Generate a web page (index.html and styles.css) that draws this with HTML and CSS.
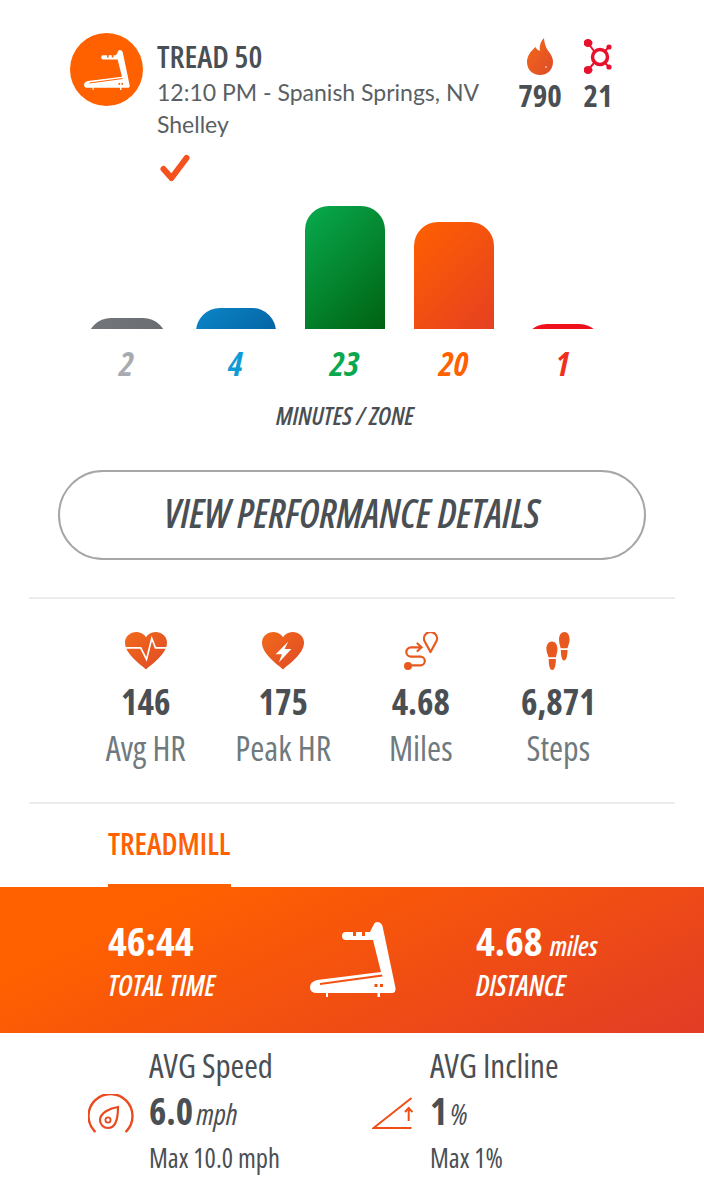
FILE: index.html
```html
<!DOCTYPE html>
<html lang="en">
<head>
    <meta charset="UTF-8">
    <meta name="viewport" content="width=device-width, initial-scale=1.0">
    <title>Tread 50</title>
    <link rel="stylesheet" href="styles.css">
</head>
<body>
    <svg class="defs" width="0" height="0" aria-hidden="true">
        <defs>
            <linearGradient id="warm" x1="0" y1="0" x2="1" y2="1">
                <stop offset="0" stop-color="#f26a1b"/>
                <stop offset="1" stop-color="#df4a26"/>
            </linearGradient>
            <!-- treadmill, used in the class badge and the orange band -->
            <symbol id="treadmill" viewBox="0 0 86 75">
                <path fill-rule="evenodd" d="M67 0Q71 0 72.5 4L85.5 66Q86 71 82 71H70V75H67.5V71H18V75H16V71H7Q0 71 0 65Q0 60 7 58L71 50L63 18H36Q32 18 32 14Q32 10 36 10H60L64 2Q65 0 67 0ZM43 10H46V14H43ZM52 10H55V14H52ZM10 61L72 52.5L72.5 54.5L10 63ZM64.5 62H67.5V65H64.5ZM70 62H73V65H70Z"/>
            </symbol>
        </defs>
    </svg>

    <header class="head">
        <div class="badge">
            <svg class="badge-icon"><use href="#treadmill"/></svg>
        </div>
        <div class="head-text">
            <h1>TREAD 50</h1>
            <p>12:10 PM - Spanish Springs, NV</p>
            <p>Shelley</p>
            <svg class="check" viewBox="0 0 30 28">
                <path d="M3.5 15L11.5 24L26.5 4" fill="none" stroke="#f4511e" stroke-width="6" stroke-linecap="round" stroke-linejoin="round"/>
            </svg>
        </div>
        <div class="head-stat">
            <svg class="flame" viewBox="0 0 26 37">
                <path fill="url(#warm)" d="M17 0C14 3 12 8 13 13C11 12 9 11 8.5 9C5 12 0 17 0 24C0 32 6 37 13 37C21 37 26 31 26 24C26 17 21 14 19 9C18 6 17 3 17 0Z"/>
                <circle cx="19" cy="29" r="0.8" fill="#fff"/>
            </svg>
            <span>790</span>
        </div>
        <div class="head-stat">
            <svg class="flame" viewBox="0 0 28 37">
                <g fill="#e8112d" stroke="#e8112d">
                    <circle cx="16" cy="19" r="7.5" fill="none" stroke-width="3.5"/>
                    <path stroke-width="2" d="M10 13L4 5M21 13L25 9M21 25L25 29M10 25L4 32"/>
                    <ellipse cx="4" cy="5" rx="4.5" ry="4" stroke="none"/>
                    <circle cx="25" cy="9" r="2.6" stroke="none"/>
                    <circle cx="25" cy="29" r="2.6" stroke="none"/>
                    <ellipse cx="4" cy="32" rx="4.5" ry="4" stroke="none"/>
                </g>
            </svg>
            <span>21</span>
        </div>
    </header>

    <section class="zones">
        <div class="zone">
            <div class="bar-clip" style="height: 11px"><div class="bar bar-gray"></div></div>
            <span class="zone-num num-gray">2</span>
        </div>
        <div class="zone">
            <div class="bar-clip" style="height: 21px"><div class="bar bar-blue"></div></div>
            <span class="zone-num num-blue">4</span>
        </div>
        <div class="zone">
            <div class="bar-clip" style="height: 123px"><div class="bar bar-green"></div></div>
            <span class="zone-num num-green">23</span>
        </div>
        <div class="zone">
            <div class="bar-clip" style="height: 107px"><div class="bar bar-orange"></div></div>
            <span class="zone-num num-orange">20</span>
        </div>
        <div class="zone">
            <div class="bar-clip" style="height: 5px"><div class="bar bar-red"></div></div>
            <span class="zone-num num-red">1</span>
        </div>
    </section>
    <div class="zones-caption">MINUTES / ZONE</div>

    <a class="details-btn">VIEW PERFORMANCE DETAILS</a>

    <section class="stats">
        <div class="stat">
            <svg class="stat-icon" viewBox="0 0 40 36">
                <path fill="url(#warm)" d="M20 35.5C12 29 0 20 0 10C0 4 5 0 11 0C15 0 18 2 20 5C22 2 25 0 29 0C35 0 40 4 40 10C40 20 28 29 20 35.5Z"/>
                <path fill="none" stroke="#fff" stroke-width="1.6" d="M0 15H15L20.5 26L25.5 6L29 15H40"/>
            </svg>
            <strong>146</strong>
            <span>Avg HR</span>
        </div>
        <div class="stat">
            <svg class="stat-icon" viewBox="0 0 40 36">
                <path fill="url(#warm)" fill-rule="evenodd" d="M20 35.5C12 29 0 20 0 10C0 4 5 0 11 0C15 0 18 2 20 5C22 2 25 0 29 0C35 0 40 4 40 10C40 20 28 29 20 35.5ZM25 9L13 21H19L16 29L28 16H21.5Z"/>
            </svg>
            <strong>175</strong>
            <span>Peak HR</span>
        </div>
        <div class="stat">
            <svg class="stat-icon" viewBox="0 0 34 38">
                <g fill="none" stroke="#e8591f" stroke-width="2.2" stroke-linecap="round">
                    <path d="M26.5 20L21 10A6.5 6.5 0 1 1 32 10Z" stroke-linejoin="round"/>
                    <path d="M17 15.3H7A4.7 4.7 0 0 0 7 24.7H16.5A4.3 4.3 0 0 1 16.5 33.3H8"/>
                    <path d="M13.5 11.5L17.5 15.3L13.5 19"/>
                </g>
                <circle cx="4" cy="34" r="4" fill="#e8591f"/>
            </svg>
            <strong>4.68</strong>
            <span>Miles</span>
        </div>
        <div class="stat">
            <svg class="stat-icon" viewBox="0 0 22 36">
                <g fill="#e8591f">
                    <path d="M5.2 9C8.5 9 10.5 12 10.5 16C10.5 19 9.5 21 9 24H2C1.5 21 0 19 0 16C0 12 2 9 5.2 9Z"/>
                    <path d="M2.2 25.5H9C9 31 8 36 5.5 36C3 36 2.2 31 2.2 25.5Z"/>
                    <path d="M17.2 0C20 0 22 3 22 7C22 10.5 20.5 12.5 20 15.5H13.5C13 12.5 12 10.5 12 7C12 3 14 0 17.2 0Z"/>
                    <path d="M13.7 17H20C20 22 19 27 16.7 27C14.5 27 13.7 22 13.7 17Z"/>
                </g>
            </svg>
            <strong>6,871</strong>
            <span>Steps</span>
        </div>
    </section>

    <nav class="tabs">
        <span class="tab">TREADMILL</span>
    </nav>

    <section class="band">
        <div class="band-cell">
            <strong>46:44</strong>
            <em>TOTAL TIME</em>
        </div>
        <svg class="band-icon"><use href="#treadmill"/></svg>
        <div class="band-cell">
            <strong>4.68 <small>miles</small></strong>
            <em>DISTANCE</em>
        </div>
    </section>

    <section class="averages">
        <div class="avg avg-speed">
            <svg class="gauge" viewBox="0 0 46 39">
                <path d="M6.7 37.3A22 22 0 1 1 38.3 37.3" fill="none" stroke="#ea4a1f" stroke-width="2.4" stroke-linecap="round"/>
                <path d="M30 13C30 22 29 34 20 34A8 8 0 0 1 12 26C12 19 22 14 30 13Z" fill="none" stroke="#ea4a1f" stroke-width="2.2"/>
                <circle cx="20" cy="26" r="2.6" fill="none" stroke="#ea4a1f" stroke-width="1.8"/>
            </svg>
            <div>
                <h3>AVG Speed</h3>
                <div class="avg-value"><strong>6.0</strong> <em>mph</em></div>
                <p>Max 10.0 mph</p>
            </div>
        </div>
        <div class="avg avg-incline">
            <svg class="incline" viewBox="0 0 41 32">
                <path d="M39.5 1L1.5 31H39.5" fill="none" stroke="#f04e16" stroke-width="2"/>
                <path d="M36.7 24V11M33 15L36.7 11L40.4 15" fill="none" stroke="#f04e16" stroke-width="2"/>
            </svg>
            <div>
                <h3>AVG Incline</h3>
                <div class="avg-value"><strong>1</strong> <em>%</em></div>
                <p>Max 1%</p>
            </div>
        </div>
    </section>
</body>
</html>
```

FILE: styles.css
```css
body {
    margin: 0;
    width: 704px;
    height: 1200px;
    overflow: hidden;
    background-color: #fff;
    color: #4a4f54;
    font-family: "Open Sans", sans-serif;
    font-stretch: 75%;
}
h1, h3, p {
    margin: 0;
}
.defs {
    position: absolute;
}
.head {
    display: flex;
    padding: 33px 0 0 70px;
}
.badge {
    display: flex;
    align-items: center;
    justify-content: center;
    flex: none;
    width: 73px;
    height: 73px;
    border-radius: 50%;
    background-color: #ff6000;
}
.badge-icon {
    width: 46px;
    height: 40px;
    fill: #fff;
}
.head-text {
    width: 354px;
    margin-left: 14px;
    padding-top: 4px;
}
.head-text h1 {
    font-size: 31px;
    line-height: 39px;
    font-weight: 600;
}
.head-text p {
    font-family: "Lato", sans-serif;
    font-size: 23px;
    line-height: 32px;
    color: #5a5f64;
}
.check {
    display: block;
    width: 30px;
    height: 28px;
    margin: 14px 0 0 3px;
}
.head-stat {
    display: flex;
    flex-direction: column;
    align-items: center;
    width: 58px;
    padding-top: 5px;
    font-size: 31px;
    font-weight: 700;
    line-height: 34px;
}
.flame {
    width: 28px;
    height: 37px;
    margin-bottom: 3px;
}
.zones {
    display: grid;
    grid-template-columns: repeat(5, 109px);
    margin: 24px 0 0 72px;
}
.zone {
    display: flex;
    flex-direction: column;
    align-items: center;
    justify-content: flex-end;
}
.bar-clip {
    width: 80px;
    overflow: hidden;
}
.bar {
    width: 80px;
    height: 130px;
    border-radius: 24px 24px 0 0;
}
.bar-gray {
    background: linear-gradient(135deg, #74787c, #585c60);
}
.bar-blue {
    background: linear-gradient(135deg, #0a86c8, #00427f);
}
.bar-green {
    background: linear-gradient(135deg, #08ab4e, #005f0f);
}
.bar-orange {
    background: linear-gradient(135deg, #ff6000, #e23c26);
}
.bar-red {
    background: #f0101c;
}
.zone-num {
    margin-top: 15px;
    font-size: 34px;
    line-height: 38px;
    font-style: italic;
    font-weight: 700;
}
.num-gray { color: #a7abaf; }
.num-blue { color: #109ad6; }
.num-green { color: #0aa84f; }
.num-orange { color: #ff6000; }
.num-red { color: #f0301c; }
.zones-caption {
    margin-top: 19px;
    padding-right: 14px;
    font-size: 25px;
    line-height: 28px;
    font-style: italic;
    font-weight: 600;
    text-align: center;
}
.details-btn {
    display: block;
    box-sizing: border-box;
    width: 588px;
    height: 90px;
    margin: 41px 0 0 58px;
    border: 2px solid #a4a6a8;
    border-radius: 45px;
    font-size: 39px;
    line-height: 82px;
    font-style: italic;
    font-weight: 600;
    text-align: center;
}
.stats {
    display: grid;
    grid-template-columns: repeat(4, 137.5px);
    justify-content: center;
    width: 646px;
    height: 207px;
    box-sizing: border-box;
    margin: 37px 0 0 29px;
    padding-top: 33px;
    border-top: 2px solid #ececec;
    border-bottom: 2px solid #ececec;
}
.stat {
    display: flex;
    flex-direction: column;
    align-items: center;
}
.stat-icon {
    height: 38px;
    width: 42px;
}
.stat strong {
    margin-top: 13px;
    font-size: 35px;
    line-height: 38px;
    font-weight: 700;
}
.stat span {
    margin-top: 7px;
    font-size: 34px;
    line-height: 40px;
    color: #6f7a7e;
}
.tabs {
    height: 83px;
    padding-left: 108px;
}
.tab {
    display: block;
    box-sizing: border-box;
    width: 123px;
    height: 83px;
    padding-top: 23px;
    border-bottom: 3px solid #ff6000;
    font-size: 30px;
    line-height: 34px;
    font-weight: 600;
    color: #ff6000;
}
.band {
    display: flex;
    height: 146px;
    padding-left: 108px;
    background: linear-gradient(155deg, #ff6000 20%, #e23c26 100%);
    color: #fff;
}
.band-cell {
    display: flex;
    flex-direction: column;
    width: 202px;
    padding-top: 33px;
}
.band-cell strong {
    font-size: 40px;
    line-height: 42px;
}
.band-cell small {
    font-size: 27px;
    line-height: 1;
    font-style: italic;
    font-weight: 600;
}
.band-cell em {
    margin-top: 7px;
    font-size: 28px;
    line-height: 32px;
    font-weight: 600;
}
.band-icon {
    flex: none;
    width: 86px;
    height: 75px;
    margin: 35px 80px 0 0;
    fill: #fff;
}
.averages {
    display: flex;
    padding-top: 15px;
}
.avg {
    display: flex;
    align-items: flex-start;
}
.avg-speed {
    width: 372px;
    padding-left: 88px;
    box-sizing: border-box;
}
.gauge {
    flex: none;
    width: 46px;
    height: 39px;
    margin: 46px 15px 0 0;
}
.incline {
    flex: none;
    width: 41px;
    height: 32px;
    margin: 49px 17px 0 0;
}
.avg h3 {
    font-size: 33px;
    line-height: 36px;
    font-weight: 400;
}
.avg-value {
    margin-top: 7px;
    line-height: 40px;
}
.avg-value strong {
    font-size: 37px;
}
.avg-value em {
    font-size: 29px;
}
.avg p {
    margin-top: 3px;
    font-size: 26.5px;
    line-height: 32px;
}
```
